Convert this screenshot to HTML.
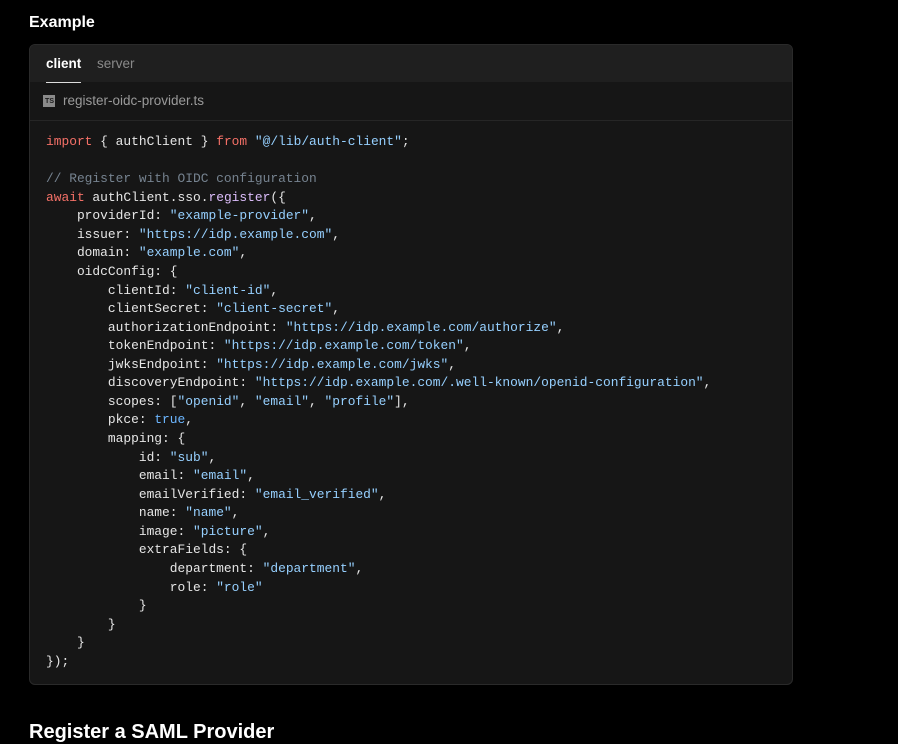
<!DOCTYPE html>
<html><head><style>
body{margin:0;background:#000;width:898px;height:728px;overflow:hidden;font-family:"Liberation Sans",sans-serif;position:relative}
h3{position:absolute;left:29px;top:14px;margin:0;color:#fff;font-size:16px;font-weight:bold}
h2{position:absolute;left:29px;top:721px;margin:0;color:#fff;font-size:20px;font-weight:bold}
.box{position:absolute;left:29px;top:44px;width:762px;height:639px;background:#161616;border:1px solid #2a2a2a;border-radius:6px;overflow:hidden}
.tabs{height:37px;background:#1f1f1f;position:relative}
.tab{position:absolute;top:11px;font-size:13.5px;color:#8a8a8a}
.tab.a{color:#fff;left:16px;font-weight:bold}
.tab.a:after{content:"";position:absolute;left:0;right:0;top:26px;height:1px;background:#ddd}
.file{height:38px;border-bottom:1px solid #262626;position:relative;color:#9a9a9a;font-size:13.5px}
.ts{position:absolute;left:13px;top:13px;width:12px;height:12px;background:#8a8a8a;color:#1a1a1a;font-size:7px;font-weight:bold;line-height:14px;text-align:right;box-sizing:border-box;padding-right:1px}
.fn{position:absolute;left:33px;top:11px}
pre{margin:0;padding:12px 16px;font-family:"Liberation Mono",monospace;font-size:12.9px;line-height:18.57px;color:#e6e6e6}
.k{color:#f47067}.s{color:#96d0ff}.c{color:#768390}.f{color:#dcbdfb}.b{color:#6cb6ff}
</style></head><body>
<h3>Example</h3>
<div class="box">
<div class="tabs"><span class="tab a">client</span><span class="tab" style="left:67px">server</span></div>
<div class="file"><span class="ts">TS</span><span class="fn">register-oidc-provider.ts</span></div>
<pre><span class="k">import</span> { authClient } <span class="k">from</span> <span class="s">"@/lib/auth-client"</span>;

<span class="c">// Register with OIDC configuration</span>
<span class="k">await</span> authClient.sso.<span class="f">register</span>({
    providerId: <span class="s">"example-provider"</span>,
    issuer: <span class="s">"https://idp.example.com"</span>,
    domain: <span class="s">"example.com"</span>,
    oidcConfig: {
        clientId: <span class="s">"client-id"</span>,
        clientSecret: <span class="s">"client-secret"</span>,
        authorizationEndpoint: <span class="s">"https://idp.example.com/authorize"</span>,
        tokenEndpoint: <span class="s">"https://idp.example.com/token"</span>,
        jwksEndpoint: <span class="s">"https://idp.example.com/jwks"</span>,
        discoveryEndpoint: <span class="s">"https://idp.example.com/.well-known/openid-configuration"</span>,
        scopes: [<span class="s">"openid"</span>, <span class="s">"email"</span>, <span class="s">"profile"</span>],
        pkce: <span class="b">true</span>,
        mapping: {
            id: <span class="s">"sub"</span>,
            email: <span class="s">"email"</span>,
            emailVerified: <span class="s">"email_verified"</span>,
            name: <span class="s">"name"</span>,
            image: <span class="s">"picture"</span>,
            extraFields: {
                department: <span class="s">"department"</span>,
                role: <span class="s">"role"</span>
            }
        }
    }
});</pre>
</div>
<h2>Register a SAML Provider</h2>
</body></html>
